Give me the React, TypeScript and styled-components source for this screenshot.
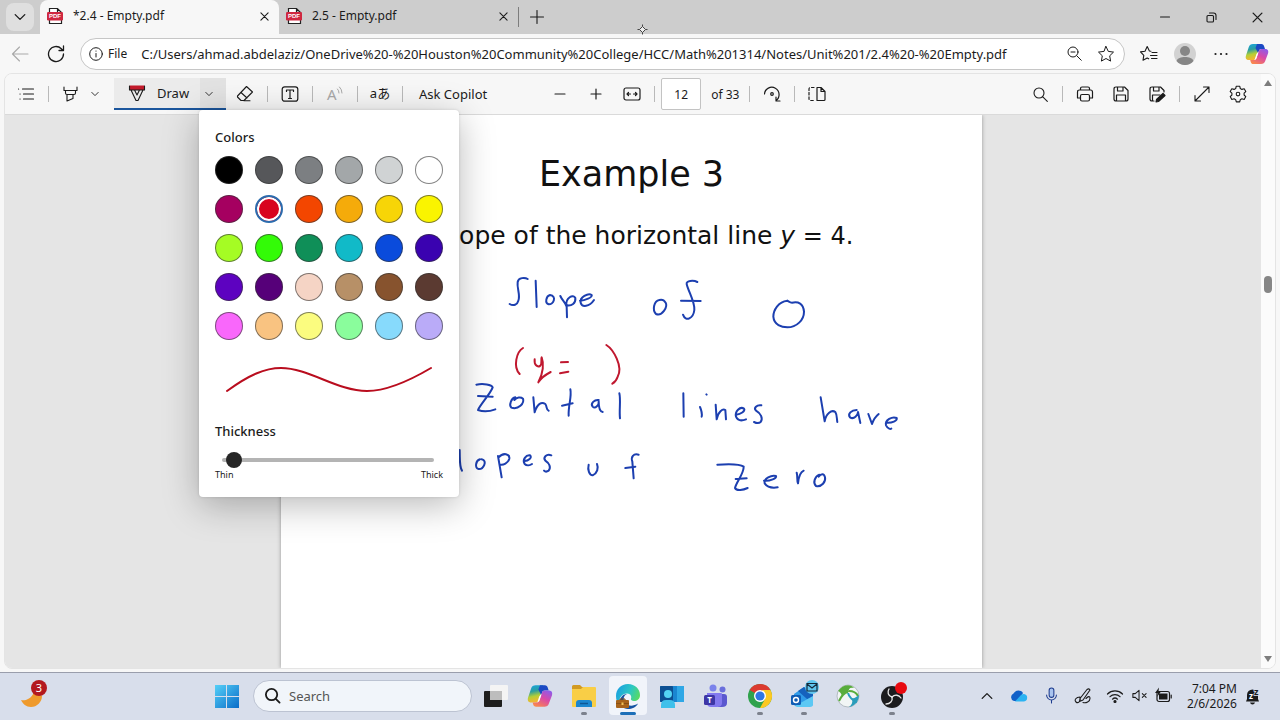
import React from 'react';
import styled, { createGlobalStyle } from 'styled-components';

const UI_FONT = "'Noto Sans', 'Open Sans', 'Noto Sans CJK JP', sans-serif";
const PAGE_FONT = "'DejaVu Sans', Verdana, sans-serif";

const GlobalStyle = createGlobalStyle`
  *, *::before, *::after { box-sizing: border-box; }
  body { margin: 0; background: #f7f7f7; color: #1b1b1b; font-family: ${UI_FONT}; font-size: 12px; }
  button, input { font: inherit; color: inherit; }
  svg { display: block; flex: none; }
`;

/* ---------- shared parts ---------- */

const Screen = styled.div`
  display: flex;
  flex-direction: column;
  min-height: 100vh;
  overflow: hidden;
`;

const IconButton = styled.button<{ $w?: number; $h?: number; $dim?: boolean }>`
  display: flex;
  align-items: center;
  justify-content: center;
  flex: none;
  width: ${(p) => p.$w ?? 32}px;
  height: ${(p) => p.$h ?? 32}px;
  padding: 0;
  border: 0;
  border-radius: 4px;
  background: transparent;
  color: ${(p) => (p.$dim ? '#a9a9a9' : '#1b1b1b')};
`;

type IconProps = { size?: number; box?: number; sw?: number; children: React.ReactNode };
const Icon = ({ size = 18, box = 18, sw = 1.1, children }: IconProps) => (
  <svg
    width={size}
    height={size}
    viewBox={`0 0 ${box} ${box}`}
    fill="none"
    stroke="currentColor"
    strokeWidth={sw}
    strokeLinecap="round"
    strokeLinejoin="round"
    aria-hidden="true"
  >
    {children}
  </svg>
);

const Chevron = ({ size = 8, up = false, sw = 1.1 }: { size?: number; up?: boolean; sw?: number }) => (
  <Icon size={size} box={10} sw={sw}>
    <path d={up ? 'M1 7l4-4 4 4' : 'M1 3l4 4 4-4'} />
  </Icon>
);

/* ---------- tab strip ---------- */

const TabStrip = styled.header`
  display: flex;
  align-items: center;
  height: 34px;
  background: #cdcdcd;
`;

const TabSearch = styled.div`
  display: flex;
  padding: 0 6px;
`;

const TabSearchButton = styled(IconButton)`
  border-radius: 8px;
  background: #dfdfdf;
`;

const Tab = styled.div<{ $active?: boolean }>`
  display: flex;
  align-items: center;
  width: 239px;
  height: 34px;
  padding: 0 3px 2px 7px;
  border-radius: 8px 8px 0 0;
  background: ${(p) => (p.$active ? '#f7f7f7' : 'transparent')};
`;

const TabTitle = styled.span`
  flex: 1;
  margin-left: 10px;
  line-height: 16px;
  white-space: nowrap;
`;

const TabDivider = styled.span`
  width: 1px;
  height: 20px;
  background: #7d7d7d;
`;

const WindowButtons = styled.div`
  display: flex;
  margin-left: auto;
`;

const PdfIcon = () => (
  <svg width="16" height="18" viewBox="0 0 16 18" aria-hidden="true">
    <path d="M2.500 6V1.500h8l4 4V6M2.500 13v3.500h12V13M10.500 1.500v4h4" fill="#fff" stroke="#222" strokeWidth="1.200" />
    <rect x="0" y="5" width="16" height="8.500" rx="1.200" fill="#cf2740" />
    <text x="8" y="11.400" fontSize="6" fontWeight="700" textAnchor="middle" fill="#fff" fontFamily="Liberation Sans, sans-serif">
      PDF
    </text>
  </svg>
);

const CloseIcon = ({ size = 9, sw = 1.2 }: { size?: number; sw?: number }) => (
  <Icon size={size} box={10} sw={sw}>
    <path d="M1 1l8 8M9 1L1 9" />
  </Icon>
);

/* ---------- navigation row ---------- */

const NavRow = styled.nav`
  display: flex;
  align-items: center;
  height: 39px;
  padding: 0 7px 0 4px;
  gap: 4px;
`;

const AddressBar = styled.form`
  display: flex;
  flex: 1;
  align-items: center;
  height: 32px;
  margin: 0 4px;
  padding: 0 2px 0 8px;
  border: 1px solid #c6c6c6;
  border-radius: 16px;
  background: #fff;
`;

const SiteInfo = styled.button`
  display: flex;
  align-items: center;
  gap: 5px;
  padding: 0;
  border: 0;
  background: none;
  font-size: 12px;
`;

const UrlInput = styled.input`
  flex: 1;
  min-width: 0;
  margin-left: 14px;
  padding: 0;
  border: 0;
  outline: 0;
  background: none;
  font-size: 13px;
`;

const CopilotLogo = ({ size }: { size: number }) => (
  <svg width={size} height={size} viewBox="0 0 24 24" aria-hidden="true">
    <defs>
      <linearGradient id="copA" x1="0" y1="0" x2="0.200" y2="1">
        <stop offset="0" stopColor="#18a4e4" />
        <stop offset="0.400" stopColor="#2b9fa0" />
        <stop offset="0.700" stopColor="#b6cf35" />
        <stop offset="1" stopColor="#f2b632" />
      </linearGradient>
      <linearGradient id="copB" x1="0.800" y1="0" x2="0.200" y2="1">
        <stop offset="0" stopColor="#8f5be8" />
        <stop offset="0.450" stopColor="#d948a8" />
        <stop offset="1" stopColor="#fb8a4a" />
      </linearGradient>
    </defs>
    <path d="M8 2h7l-1.500 6-3 8.500c-.5 1-1.200 1.500-2.500 1.500H4c-3 0-3.800-2-3-4.600L3.800 5C4.400 3 5.800 2 8 2z" fill="url(#copA)" />
    <path d="M12 2h4.500c1.500 0 2.300 1 2.700 2.400L20 7h-3.500c-1.500 0-2.300.8-2.700 2.200L13 11 10.500 6z" fill="#1b49c4" />
    <path d="M16 22H8.500c-1.700 0-2.500-1-2.900-2.600L5.200 18H8.800c1.500 0 2.500-.9 3-2.500l2-6.300c.4-1.400 1.200-2.200 2.700-2.200H20c3 0 3.800 2 3 4.600L20.200 19c-.6 2-2 3-4.200 3z" fill="url(#copB)" />
    <path d="M13.300 10.500l-1.800 5.500c-.4 1-1 1.700-2 2l1.800-5.500c.4-1 1-1.700 2-2z" fill="#fff" />
  </svg>
);

const Avatar = () => (
  <svg width="22" height="22" viewBox="0 0 22 22" aria-hidden="true">
    <circle cx="11" cy="11" r="11" fill="#d2d2d2" />
    <circle cx="11" cy="8" r="5" fill="#868686" />
    <path d="M2.500 18c1-3 4.500-4 8.500-4s7.500 1 8.500 4a11 11 0 0 1-17 0z" fill="#868686" />
  </svg>
);

/* ---------- PDF viewer ---------- */

const ViewerFrame = styled.main`
  display: flex;
  flex: 1;
  margin: 0 4px 3px;
  border: 1px solid #e4e4e4;
  border-radius: 8px;
  overflow: hidden;
`;

const ViewerColumn = styled.div`
  display: flex;
  flex: 1;
  flex-direction: column;
  min-width: 0;
`;

const Toolbar = styled.div`
  position: relative;
  z-index: 2;
  display: flex;
  align-items: center;
  height: 41px;
  padding: 0 7px 0 5px;
  background: #f7f7f7;
  border-bottom: 1px solid #dadada;
`;

const ToolGroup = styled.div<{ $gap?: number; $ml?: string }>`
  display: flex;
  align-items: center;
  gap: ${(p) => p.$gap ?? 0}px;
  margin-left: ${(p) => p.$ml ?? '0'};
`;

const Divider = styled.span`
  flex: none;
  width: 1px;
  height: 16px;
  margin: 0 6px;
  background: #b9b9b9;
`;

const DrawGroup = styled.div`
  display: flex;
  height: 32px;
  margin: 0 3px 0 11px;
  border-bottom: 2px solid #1b569d;
  background: #ebebeb;
`;

const DrawButton = styled.button`
  display: flex;
  align-items: center;
  gap: 11px;
  width: 86px;
  padding: 0 0 0 14px;
  border: 0;
  background: none;
  font-size: 13px;
`;

const DrawMenu = styled.div`
  position: relative;
  width: 26px;
  background: #e2e2e2;
`;

const TextButton = styled.button`
  height: 32px;
  padding: 0 10px;
  border: 0;
  background: none;
  font-size: 13px;
  white-space: nowrap;
`;

const GlyphButton = styled(IconButton)`
  font-size: 13px;
  line-height: 16px;
  padding-bottom: 2px;
`;

const PageInput = styled.input`
  width: 40px;
  height: 32px;
  padding: 0;
  border: 1px solid #c3c3c3;
  border-radius: 2px;
  background: #fff;
  font-size: 12px;
  text-align: center;
`;

const PageCount = styled.label`
  margin: 0 4px 0 10px;
  font-size: 12px;
  white-space: nowrap;
`;

/* ---------- pen options popup ---------- */

const PenPopup = styled.section`
  position: absolute;
  top: 32px;
  left: -1px;
  width: 260px;
  height: 387px;
  padding: 17px 16px;
  border-radius: 4px;
  background: #fff;
  box-shadow: 0 8px 36px rgba(0, 0, 0, 0.28), 0 0 3px rgba(0, 0, 0, 0.14);
`;

const PopupHeading = styled.h2`
  margin: 0;
  font-size: 13px;
  font-weight: 500;
  line-height: 20px;
`;

const Swatches = styled.div`
  display: grid;
  grid-template-columns: repeat(6, 28px);
  gap: 11px 12px;
  margin-top: 9px;
`;

const Swatch = styled.input<{ $color: string }>`
  appearance: none;
  width: 28px;
  height: 28px;
  margin: 0;
  border: 1px solid rgba(50, 50, 50, 0.6);
  border-radius: 50%;
  background: ${(p) => p.$color};
  &:checked {
    border: 2px solid #2b6cae;
    box-shadow: inset 0 0 0 2px #fff;
  }
`;

const StrokePreview = styled.svg`
  width: 100%;
  height: 32px;
  margin: 23px 0 26px;
`;

const ThicknessSlider = styled.input`
  appearance: none;
  display: block;
  width: 212px;
  height: 16px;
  margin: 11px 0 0 7px;
  background: transparent;
  &::-webkit-slider-runnable-track {
    height: 4px;
    border-radius: 2px;
    background: #b4b4b4;
  }
  &::-webkit-slider-thumb {
    appearance: none;
    width: 16px;
    height: 16px;
    margin-top: -6px;
    border-radius: 50%;
    background: #262626;
  }
`;

const RangeEnds = styled.div`
  display: flex;
  justify-content: space-between;
  font-size: 9px;
  line-height: 14px;
`;

const COLORS: [string, string][] = [
  ['Black', '#000000'], ['Dark gray', '#56575a'], ['Gray', '#7c7f82'], ['Medium gray', '#a3a7a9'], ['Light gray', '#d0d3d4'], ['White', '#ffffff'],
  ['Magenta', '#a50060'], ['Red', '#d8041f'], ['Orange red', '#f34600'], ['Orange', '#f5ab0a'], ['Gold', '#f7d507'], ['Yellow', '#faf400'],
  ['Lime', '#a5fc24'], ['Green', '#33fb07'], ['Dark green', '#0f8f58'], ['Teal', '#11bac8'], ['Blue', '#0a4bdc'], ['Indigo', '#3a02b0'],
  ['Violet', '#5d02c0'], ['Purple', '#560079'], ['Blush', '#f5d4c5'], ['Tan', '#b79067'], ['Brown', '#87532e'], ['Dark brown', '#5b3a31'],
  ['Pink', '#f967fb'], ['Peach', '#f9c381'], ['Light yellow', '#fbfc7f'], ['Mint', '#8afd9c'], ['Sky', '#87dafc'], ['Lavender', '#baabf8'],
];

const PenOptions = () => (
  <PenPopup aria-label="Pen options">
    <PopupHeading id="pen-colors">Colors</PopupHeading>
    <Swatches role="radiogroup" aria-labelledby="pen-colors">
      {COLORS.map(([name, color]) => (
        <Swatch key={name} type="radio" name="pen-color" aria-label={name} $color={color} defaultChecked={name === 'Red'} />
      ))}
    </Swatches>
    <StrokePreview viewBox="0 0 228 32" aria-hidden="true">
      <path d="M12 28C34 12 50 5 66 5c28 0 56 23 86 23 18 0 42-10 64-23" fill="none" stroke="#b90d1e" strokeWidth="2" strokeLinecap="round" />
    </StrokePreview>
    <PopupHeading as="label" htmlFor="pen-thickness">Thickness</PopupHeading>
    <ThicknessSlider id="pen-thickness" type="range" min={0} max={100} defaultValue={2} />
    <RangeEnds>
      <span>Thin</span>
      <span>Thick</span>
    </RangeEnds>
  </PenPopup>
);

/* ---------- document ---------- */

const Canvas = styled.div`
  display: flex;
  flex: 1;
  justify-content: center;
  background: #e5e5e5;
`;

const Page = styled.article`
  position: relative;
  width: 701px;
  min-height: 553px;
  margin-right: 3px;
  padding: 35px 50px;
  background: #fff;
  box-shadow: 0 0 4px rgba(0, 0, 0, 0.35);
  color: #111;
  font-family: ${PAGE_FONT};
`;

const PageTitle = styled.h1`
  margin: 0;
  font-size: 35px;
  font-weight: 400;
  line-height: 48px;
  text-align: center;
`;

const PageText = styled.p`
  margin: 21px 0 0;
  font-size: 25px;
  line-height: 34px;
  white-space: nowrap;
`;

const Equation = styled.span`
  font-size: 24px;
`;

const Ink = styled.svg`
  position: absolute;
  top: 0;
  left: 0;
  width: 100%;
`;

const BLUE_LEFT = [
  'M233 57C225 52 205 52 203 66C200 85 212 105 205 122C202 134 190 139 179 132',
  'M257 62L260 141',
  'M300 105C288 108 284 130 296 133C310 134 322 108 300 105',
  'M331 108C336 120 346 126 350 140L351 172M349 138C346 112 370 102 376 114C378 130 364 138 352 136',
  'M390 122C405 122 428 112 425 105C415 98 388 112 392 128C396 143 418 141 432 120',
  'M628 120C612 122 606 150 618 162C636 170 654 140 647 128C642 120 634 118 628 120',
  'M742 66C730 60 708 62 710 72C715 95 735 125 733 150C730 175 707 187 699 164M693 122L752 123',
  'M79 374C100 370 125 374 128 382C122 400 90 435 84 450C100 456 120 454 136 448M84 408L128 410',
  'M196 412C184 414 176 435 184 443C205 450 224 430 219 416C212 410 200 412 193 420',
  'M250 412L254 457C262 430 275 425 286 432C292 440 288 450 296 452',
  'M361 388C366 410 354 440 356 467M336 437L368 430',
  'M446 420C434 418 420 430 428 440C436 448 448 434 446 424C446 440 450 455 458 456',
  'M508 400C513 420 507 450 510 475',
  'M700 400L701 470',
  'M29 570C30 600 28 620 36 632',
  'M90 598C76 602 74 624 86 627C100 628 114 602 95 598',
  'M144 588L155 652M146 592C160 576 180 582 178 596C174 610 160 616 150 614',
  'M222 603C235 604 248 592 240 586C228 584 216 600 224 612C230 618 240 616 246 612',
  'M304 586C290 580 278 592 286 602C298 610 304 622 296 632C290 636 284 634 282 632',
  'M416 614C412 630 418 645 428 646C442 640 446 624 441 612',
  'M566 584C550 580 542 590 547 605L551 655M526 624L556 620',
];

const BLUE_RIGHT = [
  'M292 122C265 125 250 150 250 170C252 195 275 202 292 202C320 202 342 180 342 155C340 130 325 124 306 128C300 128 296 124 292 122',
  'M49 403L50 404',
  'M30 441C36 455 36 465 35 470',
  'M77 434L80 478C84 455 98 445 106 450L108 478',
  'M138 463C150 465 168 452 162 446C150 438 134 455 138 470C144 484 158 482 168 478',
  'M214 436C200 434 190 444 198 452C212 460 220 475 212 486C205 492 196 488 192 486',
  'M392 412L404 484C408 460 425 448 436 456C442 465 440 478 442 486',
  'M500 450C484 450 472 462 480 472C492 480 504 465 504 456L511 489',
  'M535 462L546 492C550 480 556 470 566 462',
  'M588 488C605 490 624 482 620 474C607 468 584 480 588 496C594 508 602 507 604 506',
  'M82 614C110 612 150 612 161 620C162 640 140 665 135 684C140 694 160 690 173 684M137 657L170 655',
  'M222 662C240 664 262 654 258 648C245 644 220 655 224 670C232 682 250 684 263 682',
  'M320 638C324 650 320 665 324 670C326 650 332 636 341 632',
  'M388 644C374 650 368 668 378 678C395 682 408 665 405 652C402 640 394 640 386 650',
];

const RED = [
  'M219 264C200 275 188 320 209 342',
  'M254 298C252 315 262 322 270 318C278 312 272 300 275 292C282 310 280 340 265 367C272 355 285 345 302 336',
  'M333 307L354 306M330 340L355 335',
  'M469 255C490 268 520 320 503 350C500 360 492 368 487 371',
];

const Handwriting = () => (
  <Ink viewBox="0 0 2103 1659" fill="none" strokeWidth="6" strokeLinecap="round" strokeLinejoin="round" role="img" aria-label="Handwritten notes">
    <g transform="translate(507 435)" stroke="#1c3fb0">
      {BLUE_LEFT.map((d) => <path key={d} d={d} />)}
    </g>
    <g transform="translate(1227 435)" stroke="#1c3fb0">
      {BLUE_RIGHT.map((d) => <path key={d} d={d} />)}
    </g>
    <g transform="translate(507 435)" stroke="#c0182f">
      {RED.map((d) => <path key={d} d={d} />)}
    </g>
  </Ink>
);

const ScrollColumn = styled.div`
  display: flex;
  flex-direction: column;
  align-items: center;
  width: 14px;
  padding: 6px 0;
  background: #fbfbfb;
`;

const ScrollArrow = styled.button<{ $down?: boolean }>`
  width: 8px;
  height: 6px;
  padding: 0;
  border: 0;
  background: #7d7d7d;
  clip-path: ${(p) => (p.$down ? 'polygon(0 0, 100% 0, 50% 100%)' : 'polygon(50% 0, 100% 100%, 0 100%)')};
`;

const ScrollTrack = styled.div`
  flex: 1;
  padding-top: 190px;
`;

const ScrollThumb = styled.div`
  width: 8px;
  height: 17px;
  border-radius: 4px;
  background: #868686;
`;

const PenCursor = styled.svg`
  position: absolute;
  top: 24px;
  left: 637px;
`;

/* ---------- taskbar ---------- */

const Taskbar = styled.footer`
  display: flex;
  align-items: center;
  height: 48px;
  padding: 0 15px 2px 0;
  border-top: 1px solid #9a9eac;
  background: #d8deeb;
`;

const Widgets = styled.div`
  flex: 1;
  padding: 0 0 2px 13px;
`;

const TaskApps = styled.div`
  display: flex;
  align-items: center;
`;

const TaskSearch = styled.label`
  display: flex;
  align-items: center;
  gap: 8px;
  width: 219px;
  height: 32px;
  margin: 0 2px 0 4px;
  padding: 0 10px;
  border: 1px solid #bcc3d2;
  border-radius: 16px;
  background: #f1f5fa;
`;

const TaskSearchInput = styled.input`
  flex: 1;
  min-width: 0;
  padding: 0;
  border: 0;
  outline: 0;
  background: none;
  font-size: 13px;
  &::placeholder { color: #555; opacity: 1; }
`;

const AppButton = styled.button<{ $state?: 'active' | 'open' }>`
  position: relative;
  display: flex;
  align-items: center;
  justify-content: center;
  width: 38px;
  height: 39px;
  margin: 0 3px;
  padding: 0;
  border: 0;
  border-radius: 4px;
  background: ${(p) => (p.$state === 'active' ? '#f1f4fa' : 'transparent')};
  &::after {
    content: '';
    display: ${(p) => (p.$state ? 'block' : 'none')};
    position: absolute;
    bottom: 0;
    width: ${(p) => (p.$state === 'active' ? 16 : 6)}px;
    height: 3px;
    border-radius: 2px;
    background: ${(p) => (p.$state === 'active' ? '#1d6fb8' : '#7c818c')};
  }
`;

const Tray = styled.div`
  display: flex;
  align-items: center;
  margin-left: 57px;
`;

const Clock = styled.time`
  width: 58px;
  margin-right: 4px;
  font-size: 12px;
  line-height: 15px;
  text-align: right;
  white-space: pre-line;
`;

const Art = ({ w = 26, h = 26, children }: { w?: number; h?: number; children: React.ReactNode }) => (
  <svg width={w} height={h} viewBox={`0 0 ${w} ${h}`} aria-hidden="true">{children}</svg>
);

const WeatherArt = () => (
  <Art w={32} h={34}>
    <path d="M2 22c3 1 10 0 13-8l8 4c0 6-5 11-11 11-5 0-8-3-10-7z" fill="#ef9a2c" />
    <circle cx="20" cy="10" r="8" fill="#b3191f" />
    <text x="20" y="14" fontSize="11" textAnchor="middle" fill="#fff" fontFamily={UI_FONT}>3</text>
  </Art>
);

const StartArt = () => (
  <Art w={24} h={24}>
    <defs>
      <linearGradient id="win" x1="0" y1="0" x2="1" y2="1">
        <stop offset="0" stopColor="#55d0f8" />
        <stop offset="1" stopColor="#0a6cc8" />
      </linearGradient>
    </defs>
    <path d="M0 1h11v11H0zM12 1h12v11H12zM0 13h11v11H0zM12 13h12v11H12z" fill="url(#win)" />
  </Art>
);

const TaskViewArt = () => (
  <Art>
    <rect x="1" y="8" width="18" height="16" rx="1" fill="#1e1e1e" />
    <rect x="7" y="2" width="18" height="15" rx="1" fill="#f4f4f4" />
    <rect x="7" y="8" width="12" height="9" fill="#bdbdbd" />
  </Art>
);

const FolderArt = () => (
  <Art>
    <path d="M1 3.500Q1 2 2.500 2H9l2 2h13v6H1z" fill="#d29a22" />
    <path d="M1 6h9l2-2h12q1 0 1 1v18q0 1-1 1H2q-1 0-1-1z" fill="#f9ce46" />
    <path d="M5 24v-4q0-3 3-3h10q3 0 3 3v4z" fill="#1b86cf" />
    <path d="M9 20.500h8" stroke="#0d5795" strokeWidth="1.500" />
  </Art>
);

const EdgeArt = () => (
  <Art>
    <defs>
      <linearGradient id="edge" x1="0" y1="0.200" x2="1" y2="0.600">
        <stop offset="0" stopColor="#1a9ee2" />
        <stop offset="0.550" stopColor="#2cc7c4" />
        <stop offset="1" stopColor="#5bdc5a" />
      </linearGradient>
    </defs>
    <path d="M1 13C1 6 6 1 13 1s12 5 12 11c0 4-3 6-6 6-2 0-3.500-1-3-2.500.5-1 .5-5-4-5-6 0-9 6-7 12-3-2-4-6-4-9.500z" fill="url(#edge)" />
    <path d="M12 11c-3 1-4.500 5-2 8.500 3 4 8 4 13 1-2 4-6 5.500-10 5.500-5 0-9-4-8-8.500C6 13 9 11 12 11z" fill="#1553a3" />
    <rect x="1" y="17" width="13" height="8" rx="1" fill="#a8641b" />
    <path d="M5 17v-1h5v1" stroke="#7d4710" fill="none" />
    <path d="M1 20.500h13" stroke="#8a5014" />
    <rect x="6.500" y="19.500" width="2" height="2.500" fill="#f3c35a" />
  </Art>
);

const PeopleArt = () => (
  <Art>
    <rect x="1" y="3" width="24" height="16" rx="1" fill="#1a86d1" />
    <rect x="1" y="3" width="13" height="16" rx="1" fill="#0c4f92" />
    <rect x="18" y="3" width="7" height="16" fill="#2fa7e6" />
    <circle cx="9" cy="11" r="4" fill="#54d4f3" />
    <path d="M2 25v-3q0-5 5-5h4q5 0 5 5v3z" fill="#3fc0ea" />
  </Art>
);

const TeamsArt = () => (
  <Art>
    <circle cx="10" cy="5" r="3.500" fill="#7b83eb" />
    <circle cx="19.500" cy="6.500" r="3" fill="#6a6fdc" />
    <path d="M15 11h6q3 0 3 3v6q0 4-5 4h-4z" fill="#5a57cf" />
    <path d="M4 10h14q1 0 1 1v9q0 4-5 4H8q-4 0-4-4z" fill="#8379ef" />
    <rect x="1" y="12" width="11" height="10" rx="1.500" fill="#3d36a6" />
    <text x="6.500" y="20" fontSize="8" fontWeight="700" textAnchor="middle" fill="#fff" fontFamily={UI_FONT}>T</text>
  </Art>
);

const ChromeArt = () => (
  <Art>
    <circle cx="13" cy="13" r="12" fill="#2fa24c" />
    <path d="M13 13L2.600 7A12 12 0 0 1 23.400 7z" fill="#dc3a30" />
    <path d="M23.400 7A12 12 0 0 1 13 25l5-9-3-9z" fill="#fcc822" />
    <circle cx="13" cy="13" r="6" fill="#fff" />
    <circle cx="13" cy="13" r="4.600" fill="#2f76e3" />
  </Art>
);

const OutlookArt = () => (
  <Art w={30} h={34}>
    <path d="M5 15l10-7 9 7v10q0 2-2 2H7q-2 0-2-2z" fill="#2f9be8" />
    <path d="M9 12l6-4 9 7v4l-6 1z" fill="#1662bd" />
    <path d="M6 27l18-10v8q0 3-3 3H8z" fill="#5cc8f4" />
    <rect x="2" y="16" width="10" height="10" rx="1.500" fill="#0f5cb4" />
    <circle cx="7" cy="21" r="2.500" fill="none" stroke="#fff" strokeWidth="1.400" />
    <circle cx="23" cy="8" r="7" fill="#5fc5ee" />
    <path d="M18 4.500h10v7.500H18zM18 5l5 4 5-4" fill="none" stroke="#13293b" strokeWidth="1.200" />
  </Art>
);

const CiscoArt = () => (
  <Art>
    <circle cx="13" cy="13" r="11" fill="#f1f5f5" stroke="#a5adb5" strokeWidth="0.800" />
    <path d="M3 8C8 1 16 1 19 5c-4-1-6 1-5 4-4 0-5 1-7 4-1-3-2-4-4-5z" fill="#58ad3c" />
    <path d="M14 8c4 0 7 1 9 5M13 9c-5 1-7 5-9 9" stroke="#58ad3c" strokeWidth="2" fill="none" />
    <path d="M24 12c0 6-4 11-10 12 3-2 4-5 3-9 2 1 4-1 7-3z" fill="#2a9dbb" />
    <path d="M13 10c1 4 5 8 9 9" stroke="#2a9dbb" strokeWidth="2" fill="none" />
  </Art>
);

const ObsArt = () => (
  <Art w={30} h={30}>
    <circle cx="15" cy="16" r="11" fill="#1c1c1e" />
    <g fill="none" stroke="#e9e9e9" strokeWidth="1.300" strokeLinecap="round">
      <path d="M15 16c-4-1-5-5-3-8" />
      <path d="M15 16c3-3 7-2 9 1" />
      <path d="M15 16c1 4-2 7-6 7" />
    </g>
    <circle cx="24" cy="7" r="6" fill="#e80a10" />
  </Art>
);

const TrayIcons = {
  onedrive: (
    <Art w={18} h={14}>
      <path d="M4 12a4 4 0 0 1-.5-7.500A5.500 5.500 0 0 1 13 4l-5 8z" fill="#1160c8" />
      <path d="M5 12.500l6-6.500a5 5 0 0 1 3-1 3.800 3.800 0 0 1 0 7.500z" fill="#2bb3f2" />
    </Art>
  ),
  pen: (
    <Icon size={18} sw={1.1}>
      <path d="M6 11.500L13 2.500q2-1.500 3 .5L9 13l-3.500 1.500zM6 10c-4 0-6 3-4 5s5-1 4-4M9 15.500c3 1 7-1 7-4s-2-2-4 0" />
    </Icon>
  ),
  wifi: (
    <Icon size={18} sw={1.2}>
      <path d="M1.500 7a10.500 10.500 0 0 1 15 0M4 9.700a7 7 0 0 1 10 0M6.500 12.200a3.600 3.600 0 0 1 5 0" />
      <circle cx="9" cy="14.500" r="1" fill="currentColor" />
    </Icon>
  ),
  muted: (
    <Icon size={17} sw={1.1}>
      <path d="M2 7h2.500L8.500 3.500v11L4.500 11H2zM12 7l4 4M16 7l-4 4" />
    </Icon>
  ),
  battery: (
    <Icon size={18} sw={1.2}>
      <rect x="3" y="4.500" width="12.500" height="10" rx="2" />
      <rect x="5" y="6.500" width="8.500" height="6" fill="currentColor" stroke="none" />
      <path d="M17.200 8v3" />
      <path d="M5 0.500L1 6h3l-1 4 4-5.500H4.500z" fill="currentColor" stroke="none" />
    </Icon>
  ),
};

export default function App() {
  return (
    <Screen>
      <GlobalStyle />

      <TabStrip>
        <TabSearch>
          <TabSearchButton $w={28} $h={28} aria-label="Tab actions"><Chevron size={12} /></TabSearchButton>
        </TabSearch>
        <Tab $active>
          <PdfIcon />
          <TabTitle>*2.4 - Empty.pdf</TabTitle>
          <IconButton $w={24} $h={24} aria-label="Close tab"><CloseIcon /></IconButton>
        </Tab>
        <Tab>
          <PdfIcon />
          <TabTitle>2.5 - Empty.pdf</TabTitle>
          <IconButton $w={24} $h={24} aria-label="Close tab"><CloseIcon /></IconButton>
        </Tab>
        <TabDivider />
        <IconButton $w={36} aria-label="New tab"><Icon size={14} box={14}><path d="M7 0.500v13M0.500 7h13" /></Icon></IconButton>
        <WindowButtons>
          <IconButton $w={46} aria-label="Minimize"><Icon size={10} box={10}><path d="M0.500 5h9" /></Icon></IconButton>
          <IconButton $w={46} aria-label="Restore">
            <Icon size={11} box={11}><rect x="1" y="3.500" width="6.500" height="6.500" rx="1" /><path d="M3.500 1h4Q10 1 10 3.500v4" /></Icon>
          </IconButton>
          <IconButton $w={46} aria-label="Close"><CloseIcon size={11} /></IconButton>
        </WindowButtons>
      </TabStrip>

      <NavRow>
        <IconButton $dim aria-label="Back"><Icon><path d="M17 9H1.500M8.500 2L1.500 9l7 7" /></Icon></IconButton>
        <IconButton aria-label="Refresh">
          <Icon sw={1.3}><path d="M16.500 9a7.500 7.500 0 1 1-2.200-5.300L16 5.500M16.500 1v4.500H12" /></Icon>
        </IconButton>
        <AddressBar>
          <SiteInfo type="button">
            <Icon size={14} box={14} sw={1}><circle cx="7" cy="7" r="6.300" /><path d="M7 6.500v3.500M7 4v.2" /></Icon>
            File
          </SiteInfo>
          <UrlInput
            aria-label="Address"
            readOnly
            value="C:/Users/ahmad.abdelaziz/OneDrive%20-%20Houston%20Community%20College/HCC/Math%201314/Notes/Unit%201/2.4%20-%20Empty.pdf"
          />
          <IconButton type="button" $h={28} aria-label="Zoom">
            <Icon size={15} box={15} sw={1}><circle cx="6" cy="6" r="5" /><path d="M9.800 9.800l4.500 4.500M4 6h4" /></Icon>
          </IconButton>
          <IconButton type="button" $h={28} aria-label="Add to favorites">
            <Icon sw={1}><path d="M9 1.500l2.300 4.900 5.200.7-3.800 3.700.9 5.300L9 13.500l-4.600 2.600.9-5.300L1.500 7.100l5.200-.7z" /></Icon>
          </IconButton>
        </AddressBar>
        <IconButton aria-label="Favorites">
          <Icon><path d="M11 6.200L9.400 6 7.200 1.500 5 6.200l-4.500.7 3.300 3.400-.8 5 4.200-2.300 1.500.8M12 7.500h5M10.500 10.500H17M11.500 13.500H17" /></Icon>
        </IconButton>
        <IconButton aria-label="Profile"><Avatar /></IconButton>
        <IconButton aria-label="Settings and more">
          <Icon size={14} box={14}><g fill="currentColor" stroke="none"><circle cx="1.500" cy="7" r="1.100" /><circle cx="7" cy="7" r="1.100" /><circle cx="12.500" cy="7" r="1.100" /></g></Icon>
        </IconButton>
        <IconButton aria-label="Copilot"><CopilotLogo size={24} /></IconButton>
      </NavRow>

      <ViewerFrame>
        <ViewerColumn>
          <Toolbar role="toolbar" aria-label="PDF tools">
            <ToolGroup>
              <IconButton aria-label="Contents">
                <Icon sw={1.2}><path d="M5.500 4H16.500M6.500 9H16.500M6.500 14H16.500M1.500 4h.1M3 9h.1M3 14h.1" /></Icon>
              </IconButton>
              <Divider />
              <IconButton aria-label="Highlight">
                <Icon><path d="M2 2v3.500h13V2M3.500 5.500V8q0 1.500 1.500 1.500h7q1.500 0 1.500-1.500V5.500M5 9.500v6.500l6-2.500v-4" /></Icon>
              </IconButton>
              <IconButton $w={16} aria-label="Highlight options"><Chevron /></IconButton>
              <DrawGroup>
                <DrawButton>
                  <Icon size={18}>
                    <path d="M2 2h14v3.500H2z" fill="#c21a2b" stroke="#c21a2b" />
                    <path d="M1.500 2v4h1.500L8 16.500h2L15 6h1.500V2M3 6h12M6.500 6L9 11l2.500-5" />
                  </Icon>
                  Draw
                </DrawButton>
                <DrawMenu>
                  <IconButton $w={18} aria-label="Pen options" aria-expanded="true"><Chevron /></IconButton>
                  <PenOptions />
                </DrawMenu>
              </DrawGroup>
              <IconButton aria-label="Erase">
                <Icon><path d="M10.500 1.500L16.500 7 8 15.500H5L1.500 12 1.500 11zM5 7.500l6 5.500M8 15.800h6" /></Icon>
              </IconButton>
              <Divider />
              <IconButton aria-label="Add text">
                <Icon sw={1.2}><rect x="1.200" y="1.800" width="15.600" height="14.400" rx="2.500" /><path d="M5.500 6.500V5h7v1.500M9 5v8.500M7.500 13.500h3" /></Icon>
              </IconButton>
              <Divider />
              <IconButton $dim aria-label="Read aloud">
                <Icon sw={1}>
                  <text x="1" y="15" fontSize="15" fill="currentColor" stroke="none" fontFamily={UI_FONT}>A</text>
                  <path d="M11.500 4q1.500 1.500 1.500 4M13.500 2q2.500 2.500 2.500 6" />
                </Icon>
              </IconButton>
              <Divider />
              <GlyphButton aria-label="Translate">aあ</GlyphButton>
              <Divider />
              <TextButton>Ask Copilot</TextButton>
            </ToolGroup>

            <ToolGroup $ml="47px">
              <ToolGroup $gap={4}>
                <IconButton aria-label="Zoom out"><Icon size={12} box={12}><path d="M1 6h10" /></Icon></IconButton>
                <IconButton aria-label="Zoom in"><Icon size={12} box={12} sw={1.2}><path d="M1 6h10M6 1v10" /></Icon></IconButton>
                <IconButton aria-label="Fit to width">
                  <Icon sw={1.2}><rect x="1" y="3" width="16" height="12" rx="2" /><path d="M4 9h3.500M10.500 9H14M5.500 7.500L4 9l1.500 1.500M12.500 7.500L14 9l-1.500 1.500" /></Icon>
                </IconButton>
              </ToolGroup>
              <Divider />
              <PageInput id="page-number" aria-label="Page number" defaultValue="12" />
              <PageCount htmlFor="page-number">of 33</PageCount>
              <Divider />
              <IconButton aria-label="Rotate">
                <Icon sw={1.2}><path d="M1.500 9a7.300 7.300 0 1 1 11.500 6.500M13 12v4h4" /><circle cx="9" cy="9" r="1.300" /></Icon>
              </IconButton>
              <Divider />
              <IconButton aria-label="Page view">
                <Icon sw={1.2}><path d="M9 2.500h4l4 4v8q0 1-1 1H9zM13 2.500v4h4" /><path d="M6 2.500H2.500Q1 2.500 1 4v10q0 1.500 1.500 1.500H6" strokeDasharray="2.500 2" /></Icon>
              </IconButton>
            </ToolGroup>

            <ToolGroup $ml="auto">
              <IconButton aria-label="Find">
                <Icon size={15} box={15}><circle cx="6" cy="6" r="5" /><path d="M9.800 9.800l4.500 4.500" /></Icon>
              </IconButton>
              <Divider />
              <ToolGroup $gap={4}>
                <IconButton aria-label="Print">
                  <Icon sw={1.2}><path d="M4.500 5V3.500q0-1.500 1.500-1.500h6q1.500 0 1.500 1.500V5M4 13H1.500V7q0-2 2-2h11q2 0 2 2v6H14" /><rect x="4.500" y="9.500" width="9" height="6.500" rx="1.500" /></Icon>
                </IconButton>
                <IconButton aria-label="Save">
                  <Icon sw={1.2}><path d="M4 2h8.500L16 5.500V14q0 2-2 2H4q-2 0-2-2V4q0-2 2-2zM5.500 2v4H11V2M4.500 16v-6h9v6" /></Icon>
                </IconButton>
                <IconButton aria-label="Save as">
                  <Icon sw={1.2}><path d="M6 16H4q-2 0-2-2V4q0-2 2-2h8.500L16 5.500V7M5.500 2v4H11V2M4.500 16v-6H12" /><path d="M15 8.500l2 2-6.500 6-2.500.5.500-2.500z" fill="currentColor" /></Icon>
                </IconButton>
              </ToolGroup>
              <Divider />
              <ToolGroup $gap={4}>
                <IconButton aria-label="Full screen">
                  <Icon><path d="M2 16L16 2M10.500 2H16v5.500M2 10.500V16h5.500" /></Icon>
                </IconButton>
                <IconButton aria-label="Settings">
                  <Icon>
                    <path d="M7.300 1.200h3.400l.6 2.300 1.600.9 2.300-.7 1.600 2.900-1.700 1.600v1.800l1.700 1.600-1.600 2.900-2.300-.7-1.600.9-.6 2.200H7.300l-.6-2.200-1.600-.9-2.300.7-1.600-2.900L2.900 10V8.200L1.200 6.600l1.600-2.900 2.300.7 1.600-.9z" />
                    <circle cx="9" cy="9.100" r="1.800" />
                  </Icon>
                </IconButton>
              </ToolGroup>
            </ToolGroup>
          </Toolbar>

          <Canvas>
            <Page>
              <PageTitle>Example 3</PageTitle>
              <PageText>
                Find the slope of the horizontal line <i>y</i><Equation> = 4.</Equation>
              </PageText>
              <Handwriting />
            </Page>
          </Canvas>
        </ViewerColumn>
        <ScrollColumn>
          <ScrollArrow aria-label="Scroll up" />
          <ScrollTrack><ScrollThumb /></ScrollTrack>
          <ScrollArrow $down aria-label="Scroll down" />
        </ScrollColumn>
      </ViewerFrame>

      <PenCursor width="11" height="11" viewBox="0 0 11 11" aria-hidden="true">
        <path d="M5.500 2.500l3 3-3 3-3-3z" fill="#eee" stroke="#444" />
        <path d="M5.500 0.500v2M5.500 8.500v2M0.500 5.500h2M8.500 5.500h2" stroke="#444" />
      </PenCursor>

      <Taskbar>
        <Widgets>
          <AppButton aria-label="Weather, 3 alerts"><WeatherArt /></AppButton>
        </Widgets>
        <TaskApps>
          <AppButton aria-label="Start"><StartArt /></AppButton>
          <TaskSearch>
            <Icon size={17} sw={1.900}><circle cx="8" cy="8" r="6" /><path d="M12.500 12.500l4 4" /></Icon>
            <TaskSearchInput aria-label="Search" placeholder="Search" />
          </TaskSearch>
          <AppButton aria-label="Task view"><TaskViewArt /></AppButton>
          <AppButton aria-label="Copilot"><CopilotLogo size={26} /></AppButton>
          <AppButton $state="open" aria-label="File Explorer"><FolderArt /></AppButton>
          <AppButton $state="active" aria-label="Edge"><EdgeArt /></AppButton>
          <AppButton aria-label="People"><PeopleArt /></AppButton>
          <AppButton aria-label="Teams"><TeamsArt /></AppButton>
          <AppButton $state="open" aria-label="Chrome"><ChromeArt /></AppButton>
          <AppButton $state="open" aria-label="Outlook"><OutlookArt /></AppButton>
          <AppButton aria-label="Secure client"><CiscoArt /></AppButton>
          <AppButton $state="open" aria-label="OBS Studio"><ObsArt /></AppButton>
        </TaskApps>
        <Tray>
          <IconButton aria-label="Hidden icons"><Chevron size={12} up /></IconButton>
          <IconButton aria-label="OneDrive">{TrayIcons.onedrive}</IconButton>
          <IconButton aria-label="Microphone">
            <Icon size={17}><g stroke="#1d3c8f"><rect x="6.500" y="1" width="5" height="10" rx="2.500" fill="#a9c4ef" /><path d="M3.800 8.500a5.200 5.200 0 0 0 10.400 0M9 14v3" /></g></Icon>
          </IconButton>
          <IconButton aria-label="Pen menu">{TrayIcons.pen}</IconButton>
          <IconButton aria-label="Network">{TrayIcons.wifi}</IconButton>
          <IconButton $w={16} aria-label="Volume">{TrayIcons.muted}</IconButton>
          <IconButton aria-label="Battery">{TrayIcons.battery}</IconButton>
          <Clock>{'7:04 PM\n2/6/2026'}</Clock>
          <IconButton $w={24} aria-label="Notifications">
            <Art w={20} h={20}>
              <path d="M4 9a5.500 5.500 0 0 1 11 0v4l1 2.500H3L4 13zM7 16.500h5q-.5 2-2.500 2T7 16.500z" fill="#1b1b1b" />
              <text x="6" y="13" fontSize="8" fontWeight="700" fill="#fff" fontFamily={UI_FONT}>z</text>
              <text x="11" y="9" fontSize="9" fontWeight="700" fill="#1b1b1b" stroke="#d8deeb" strokeWidth="1.500" paintOrder="stroke" fontFamily={UI_FONT}>z</text>
            </Art>
          </IconButton>
        </Tray>
      </Taskbar>
    </Screen>
  );
}
